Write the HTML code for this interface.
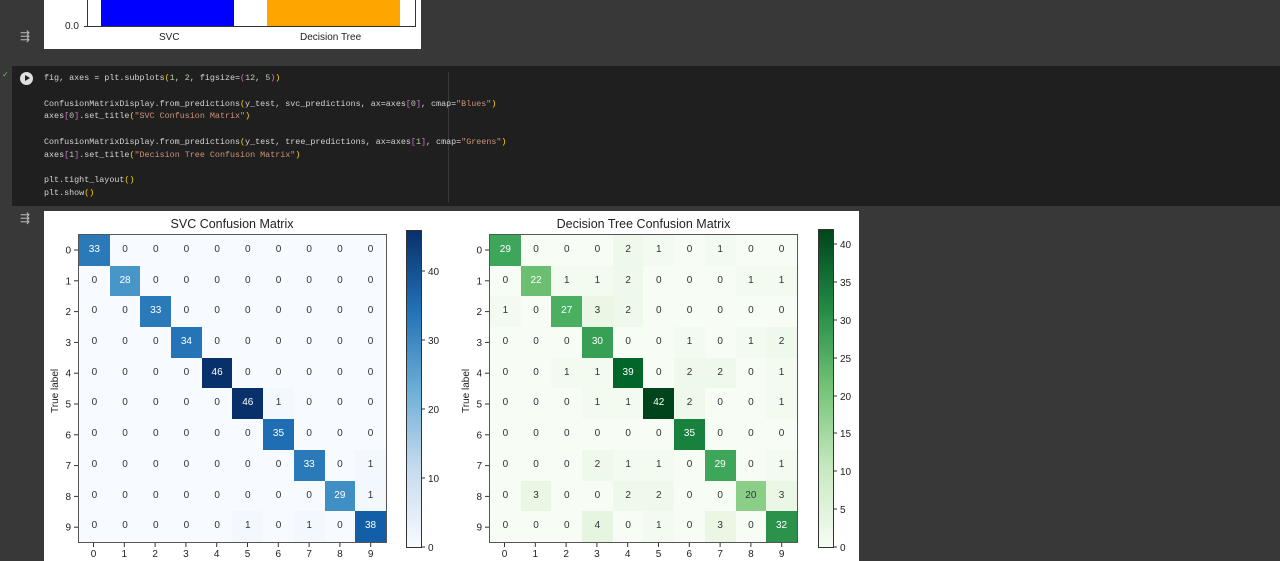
<!DOCTYPE html>
<html><head><meta charset="utf-8"><style>
*{margin:0;padding:0;box-sizing:border-box}
body{width:1280px;height:561px;background:#383838;position:relative;overflow:hidden;font-family:"Liberation Sans",sans-serif}
.abs{position:absolute}
.code{position:absolute;left:12px;top:66px;width:1268px;height:140px;background:#1f1f1f}
.code pre{position:absolute;left:32px;top:6px;font:8.4px/12.8px "Liberation Mono",monospace;color:#d4d4d4}
.y{color:#ffd700}.s{color:#ce9178}.n{color:#b5cea8}.p{color:#da70d6}
.grid{position:absolute;display:grid;grid-template-columns:repeat(10,30.7px);grid-auto-rows:30.7px;border:1px solid #555;font-size:10px;color:#333;text-align:center;line-height:30.7px}
.g1{left:78px;top:234px;background:#f7fbff}
.g2{left:489px;top:234px;background:#f7fcf5}
.w{color:#fff}
.lbl{position:absolute;font-size:10px;color:#222}
</style></head><body>
<div class="abs" style="left:44px;top:0;width:377px;height:49px;background:#fff"></div>
<div class="abs" style="left:87px;top:0;width:1px;height:27px;background:#333"></div>
<div class="abs" style="left:415px;top:0;width:1px;height:27px;background:#333"></div>
<div class="abs" style="left:84px;top:26px;width:332px;height:1px;background:#333"></div>
<div class="abs" style="left:101px;top:0;width:133px;height:26px;background:#0000ff"></div>
<div class="abs" style="left:267px;top:0;width:133px;height:26px;background:#ffa500"></div>
<div class="lbl" style="left:65px;top:21px">0.0</div>
<div class="lbl" style="left:159px;top:32px">SVC</div>
<div class="lbl" style="left:300px;top:32px">Decision Tree</div>
<div class="abs" style="left:20px;top:29px;color:#bbb;font-size:12px">⇶</div>

<div class="code">
<div class="abs" style="left:8px;top:6px;width:13px;height:13px;border-radius:50%;background:#e0e0e0"></div>
<div class="abs" style="left:13px;top:9px;width:0;height:0;border-left:5px solid #1f1f1f;border-top:3.5px solid transparent;border-bottom:3.5px solid transparent"></div>
<div class="abs" style="left:-10px;top:4px;color:#5c5;font-size:8px">✓</div>
<div class="abs" style="left:436px;top:6px;width:1px;height:130px;background:#3a3a3a"></div>
<pre>fig, axes = plt.subplots<span class="y">(</span><span class="n">1</span>, <span class="n">2</span>, figsize=<span class="p">(</span><span class="n">12</span>, <span class="n">5</span><span class="p">)</span><span class="y">)</span>

ConfusionMatrixDisplay.from_predictions<span class="y">(</span>y_test, svc_predictions, ax=axes<span class="p">[</span><span class="n">0</span><span class="p">]</span>, cmap=<span class="s">"Blues"</span><span class="y">)</span>
axes<span class="p">[</span><span class="n">0</span><span class="p">]</span>.set_title<span class="y">(</span><span class="s">"SVC Confusion Matrix"</span><span class="y">)</span>

ConfusionMatrixDisplay.from_predictions<span class="y">(</span>y_test, tree_predictions, ax=axes<span class="p">[</span><span class="n">1</span><span class="p">]</span>, cmap=<span class="s">"Greens"</span><span class="y">)</span>
axes<span class="p">[</span><span class="n">1</span><span class="p">]</span>.set_title<span class="y">(</span><span class="s">"Decision Tree Confusion Matrix"</span><span class="y">)</span>

plt.tight_layout<span class="y">()</span>
plt.show<span class="y">()</span></pre>
</div>

<div class="abs" style="left:20px;top:211px;color:#bbb;font-size:12px">⇶</div>
<div class="abs" style="left:44px;top:211px;width:815px;height:350px;background:#fff"></div>
<div class="lbl" style="left:0;width:464px;text-align:center;top:217px;font-size:12.5px">SVC Confusion Matrix</div>
<div class="lbl" style="left:489px;width:309px;text-align:center;top:217px;font-size:12.5px">Decision Tree Confusion Matrix</div>

<svg class="abs" style="left:0;top:0" width="1280" height="561">
<defs>
<linearGradient id="bl" x1="0" y1="1" x2="0" y2="0"><stop offset="0" stop-color="#f7fbff"/><stop offset=".25" stop-color="#c6dbef"/><stop offset=".5" stop-color="#6baed6"/><stop offset=".75" stop-color="#2171b5"/><stop offset="1" stop-color="#08306b"/></linearGradient>
<linearGradient id="gr" x1="0" y1="1" x2="0" y2="0"><stop offset="0" stop-color="#f7fcf5"/><stop offset=".25" stop-color="#c7e9c0"/><stop offset=".5" stop-color="#74c476"/><stop offset=".75" stop-color="#238b45"/><stop offset="1" stop-color="#00441b"/></linearGradient>
</defs>
<rect x="406.5" y="230.5" width="15" height="317" fill="url(#bl)" stroke="#333"/>
<rect x="818.5" y="229.5" width="15" height="318" fill="url(#gr)" stroke="#333"/>
<g stroke="#333">
<line x1="421" x2="425" y1="547" y2="547"/><line x1="421" x2="425" y1="478" y2="478"/><line x1="421" x2="425" y1="409" y2="409"/><line x1="421" x2="425" y1="340" y2="340"/><line x1="421" x2="425" y1="271" y2="271"/>
<line x1="833" x2="837" y1="547" y2="547"/><line x1="833" x2="837" y1="509" y2="509"/><line x1="833" x2="837" y1="471" y2="471"/><line x1="833" x2="837" y1="433" y2="433"/><line x1="833" x2="837" y1="396" y2="396"/><line x1="833" x2="837" y1="358" y2="358"/><line x1="833" x2="837" y1="320" y2="320"/><line x1="833" x2="837" y1="282" y2="282"/><line x1="833" x2="837" y1="244" y2="244"/>
<g id="yt"><line x1="74" x2="78" y1="250" y2="250"/><line x1="74" x2="78" y1="280.8" y2="280.8"/><line x1="74" x2="78" y1="311.6" y2="311.6"/><line x1="74" x2="78" y1="342.4" y2="342.4"/><line x1="74" x2="78" y1="373.2" y2="373.2"/><line x1="74" x2="78" y1="404" y2="404"/><line x1="74" x2="78" y1="434.8" y2="434.8"/><line x1="74" x2="78" y1="465.6" y2="465.6"/><line x1="74" x2="78" y1="496.4" y2="496.4"/><line x1="74" x2="78" y1="527.2" y2="527.2"/></g>
<use href="#yt" x="411"/>
<g id="xt"><line y1="543" y2="547" x1="93.5" x2="93.5"/><line y1="543" y2="547" x1="124.3" x2="124.3"/><line y1="543" y2="547" x1="155.1" x2="155.1"/><line y1="543" y2="547" x1="185.9" x2="185.9"/><line y1="543" y2="547" x1="216.7" x2="216.7"/><line y1="543" y2="547" x1="247.5" x2="247.5"/><line y1="543" y2="547" x1="278.3" x2="278.3"/><line y1="543" y2="547" x1="309.1" x2="309.1"/><line y1="543" y2="547" x1="339.9" x2="339.9"/><line y1="543" y2="547" x1="370.7" x2="370.7"/></g>
<use href="#xt" x="411"/>
</g>
<g font-family="Liberation Sans" font-size="10" fill="#222">
<text x="428" y="551">0</text><text x="428" y="482">10</text><text x="428" y="413">20</text><text x="428" y="344">30</text><text x="428" y="275">40</text>
<text x="840" y="551">0</text><text x="840" y="513">5</text><text x="840" y="475">10</text><text x="840" y="437">15</text><text x="840" y="400">20</text><text x="840" y="362">25</text><text x="840" y="324">30</text><text x="840" y="286">35</text><text x="840" y="248">40</text>
<text transform="translate(58,413) rotate(-90)">True label</text>
<text transform="translate(469,413) rotate(-90)">True label</text>
</g>
<g font-family="Liberation Sans" font-size="10" fill="#222" text-anchor="end">
<text x="71" y="253.5">0</text><text x="71" y="284.3">1</text><text x="71" y="315.1">2</text><text x="71" y="345.9">3</text><text x="71" y="376.7">4</text><text x="71" y="407.5">5</text><text x="71" y="438.3">6</text><text x="71" y="469.1">7</text><text x="71" y="499.9">8</text><text x="71" y="530.7">9</text>
<text x="482" y="253.5">0</text><text x="482" y="284.3">1</text><text x="482" y="315.1">2</text><text x="482" y="345.9">3</text><text x="482" y="376.7">4</text><text x="482" y="407.5">5</text><text x="482" y="438.3">6</text><text x="482" y="469.1">7</text><text x="482" y="499.9">8</text><text x="482" y="530.7">9</text>
</g>
<g font-family="Liberation Sans" font-size="10" fill="#222" text-anchor="middle">
<text x="93.5" y="557">0</text><text x="124.3" y="557">1</text><text x="155.1" y="557">2</text><text x="185.9" y="557">3</text><text x="216.7" y="557">4</text><text x="247.5" y="557">5</text><text x="278.3" y="557">6</text><text x="309.1" y="557">7</text><text x="339.9" y="557">8</text><text x="370.7" y="557">9</text>
<text x="504.5" y="557">0</text><text x="535.3" y="557">1</text><text x="566.1" y="557">2</text><text x="596.9" y="557">3</text><text x="627.7" y="557">4</text><text x="658.5" y="557">5</text><text x="689.3" y="557">6</text><text x="720.1" y="557">7</text><text x="750.9" y="557">8</text><text x="781.7" y="557">9</text>
</g>
</svg>

<div class="grid g1">
<div class="w" style="background:#2a7ab9">33</div><div>0</div><div>0</div><div>0</div><div>0</div><div>0</div><div>0</div><div>0</div><div>0</div><div>0</div>
<div>0</div><div class="w" style="background:#4896c8">28</div><div>0</div><div>0</div><div>0</div><div>0</div><div>0</div><div>0</div><div>0</div><div>0</div>
<div>0</div><div>0</div><div class="w" style="background:#2a7ab9">33</div><div>0</div><div>0</div><div>0</div><div>0</div><div>0</div><div>0</div><div>0</div>
<div>0</div><div>0</div><div>0</div><div class="w" style="background:#2474b7">34</div><div>0</div><div>0</div><div>0</div><div>0</div><div>0</div><div>0</div>
<div>0</div><div>0</div><div>0</div><div>0</div><div class="w" style="background:#08306b">46</div><div>0</div><div>0</div><div>0</div><div>0</div><div>0</div>
<div>0</div><div>0</div><div>0</div><div>0</div><div>0</div><div class="w" style="background:#08306b">46</div><div style="background:#f3f8fe">1</div><div>0</div><div>0</div><div>0</div>
<div>0</div><div>0</div><div>0</div><div>0</div><div>0</div><div>0</div><div class="w" style="background:#1f6eb3">35</div><div>0</div><div>0</div><div>0</div>
<div>0</div><div>0</div><div>0</div><div>0</div><div>0</div><div>0</div><div>0</div><div class="w" style="background:#2a7ab9">33</div><div>0</div><div style="background:#f3f8fe">1</div>
<div>0</div><div>0</div><div>0</div><div>0</div><div>0</div><div>0</div><div>0</div><div>0</div><div class="w" style="background:#3f8fc5">29</div><div style="background:#f3f8fe">1</div>
<div>0</div><div>0</div><div>0</div><div>0</div><div>0</div><div style="background:#f3f8fe">1</div><div>0</div><div style="background:#f3f8fe">1</div><div>0</div><div class="w" style="background:#135fa7">38</div>
</div>

<div class="grid g2">
<div class="w" style="background:#3da65a">29</div><div>0</div><div>0</div><div>0</div><div style="background:#eef9eb">2</div><div style="background:#f3fbf1">1</div><div>0</div><div style="background:#f3fbf1">1</div><div>0</div><div>0</div>
<div>0</div><div class="w" style="background:#6cbf70">22</div><div style="background:#f3fbf1">1</div><div style="background:#f3fbf1">1</div><div style="background:#eef9eb">2</div><div>0</div><div>0</div><div>0</div><div style="background:#f3fbf1">1</div><div style="background:#f3fbf1">1</div>
<div style="background:#f3fbf1">1</div><div>0</div><div class="w" style="background:#4aaf61">27</div><div style="background:#eaf7e5">3</div><div style="background:#eef9eb">2</div><div>0</div><div>0</div><div>0</div><div>0</div><div>0</div>
<div>0</div><div>0</div><div>0</div><div class="w" style="background:#37a055">30</div><div>0</div><div>0</div><div style="background:#f3fbf1">1</div><div>0</div><div style="background:#f3fbf1">1</div><div style="background:#eef9eb">2</div>
<div>0</div><div>0</div><div style="background:#f3fbf1">1</div><div style="background:#f3fbf1">1</div><div class="w" style="background:#02652a">39</div><div>0</div><div style="background:#eef9eb">2</div><div style="background:#eef9eb">2</div><div>0</div><div style="background:#f3fbf1">1</div>
<div>0</div><div>0</div><div>0</div><div style="background:#f3fbf1">1</div><div style="background:#f3fbf1">1</div><div class="w" style="background:#00441b">42</div><div style="background:#eef9eb">2</div><div>0</div><div>0</div><div style="background:#f3fbf1">1</div>
<div>0</div><div>0</div><div>0</div><div>0</div><div>0</div><div>0</div><div class="w" style="background:#17813d">35</div><div>0</div><div>0</div><div>0</div>
<div>0</div><div>0</div><div>0</div><div style="background:#eef9eb">2</div><div style="background:#f3fbf1">1</div><div style="background:#f3fbf1">1</div><div>0</div><div class="w" style="background:#3da65a">29</div><div>0</div><div style="background:#f3fbf1">1</div>
<div>0</div><div style="background:#eaf7e5">3</div><div>0</div><div>0</div><div style="background:#eef9eb">2</div><div style="background:#eef9eb">2</div><div>0</div><div>0</div><div style="background:#8ace88">20</div><div style="background:#eaf7e5">3</div>
<div>0</div><div>0</div><div>0</div><div style="background:#e5f5e0">4</div><div>0</div><div style="background:#f3fbf1">1</div><div>0</div><div style="background:#eaf7e5">3</div><div>0</div><div class="w" style="background:#2a924a">32</div>
</div>
</body></html>
